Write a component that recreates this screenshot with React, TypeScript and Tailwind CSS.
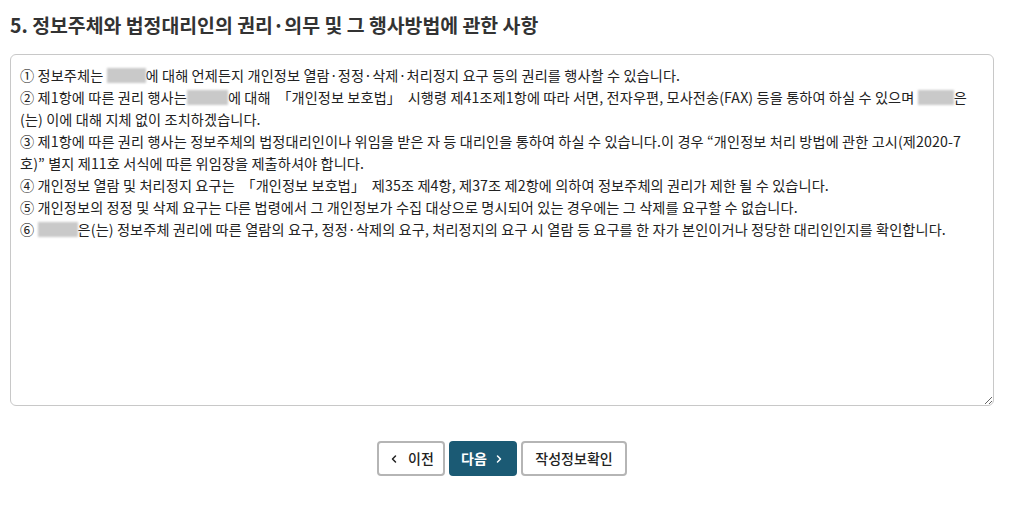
import { ChevronLeft, ChevronRight } from "lucide-react"

const font = { fontFamily: '"Noto Sans CJK KR", "Noto Sans", sans-serif' }

function Blur({ w }: { w: number }) {
  return (
    <span
      className="inline-block h-[15px] bg-[#c9c9c9] align-[-2px] blur-[1px]"
      style={{ width: w }}
    />
  )
}

export default function App() {
  return (
    <div className="w-[1025px] bg-white px-[10px] pt-[11px] text-[#333]" style={font}>
      <h2 className="text-[19.4px] font-bold leading-[28px] text-[#333]">
        5. 정보주체와 법정대리인의 권리·의무 및 그 행사방법에 관한 사항
      </h2>

      <div className="mt-[15px] h-[352px] w-[984px] resize-y overflow-auto rounded-[6px] border border-[#c8c8c8] px-[9px] pt-[9px] text-[14.2px] leading-[22px] tracking-[0.1px] text-[#222]">
        <div>
          ① 정보주체는 <Blur w={39} />에 대해 언제든지 개인정보 열람·정정·삭제·처리정지 요구 등의 권리를 행사할 수 있습니다.
        </div>
        <div>
          ② 제1항에 따른 권리 행사는<Blur w={41} />에 대해&nbsp; 「개인정보 보호법」&nbsp; 시행령 제41조제1항에 따라 서면, 전자우편, 모사전송(FAX) 등을 통하여 하실 수 있으며 <Blur w={36} />은
        </div>
        <div>(는) 이에 대해 지체 없이 조치하겠습니다.</div>
        <div>
          ③ 제1항에 따른 권리 행사는 정보주체의 법정대리인이나 위임을 받은 자 등 대리인을 통하여 하실 수 있습니다.이 경우 “개인정보 처리 방법에 관한 고시(제2020-7
        </div>
        <div>호)” 별지 제11호 서식에 따른 위임장을 제출하셔야 합니다.</div>
        <div>
          ④ 개인정보 열람 및 처리정지 요구는&nbsp; 「개인정보 보호법」&nbsp; 제35조 제4항, 제37조 제2항에 의하여 정보주체의 권리가 제한 될 수 있습니다.
        </div>
        <div>
          ⑤ 개인정보의 정정 및 삭제 요구는 다른 법령에서 그 개인정보가 수집 대상으로 명시되어 있는 경우에는 그 삭제를 요구할 수 없습니다.
        </div>
        <div>
          ⑥ <Blur w={40} />은(는) 정보주체 권리에 따른 열람의 요구, 정정·삭제의 요구, 처리정지의 요구 시 열람 등 요구를 한 자가 본인이거나 정당한 대리인인지를 확인합니다.
        </div>
      </div>

      <div className="mt-[35px] flex w-[984px] justify-center gap-[4px]">
        <button className="flex h-[35px] w-[68px] items-center justify-center gap-[8px] rounded-[4px] border-2 border-[#b5b5b5] bg-white text-[14px] font-medium text-[#222]">
          <ChevronLeft size={12} strokeWidth={3} />
          이전
        </button>
        <button className="flex h-[35px] w-[68px] items-center justify-center gap-[6px] rounded-[4px] bg-[#1b5a74] text-[14px] font-bold text-white">
          다음
          <ChevronRight size={12} strokeWidth={3} />
        </button>
        <button className="flex h-[35px] w-[106px] items-center justify-center rounded-[4px] border-2 border-[#b5b5b5] bg-white text-[14px] font-medium text-[#222]">
          작성정보확인
        </button>
      </div>
    </div>
  )
}
